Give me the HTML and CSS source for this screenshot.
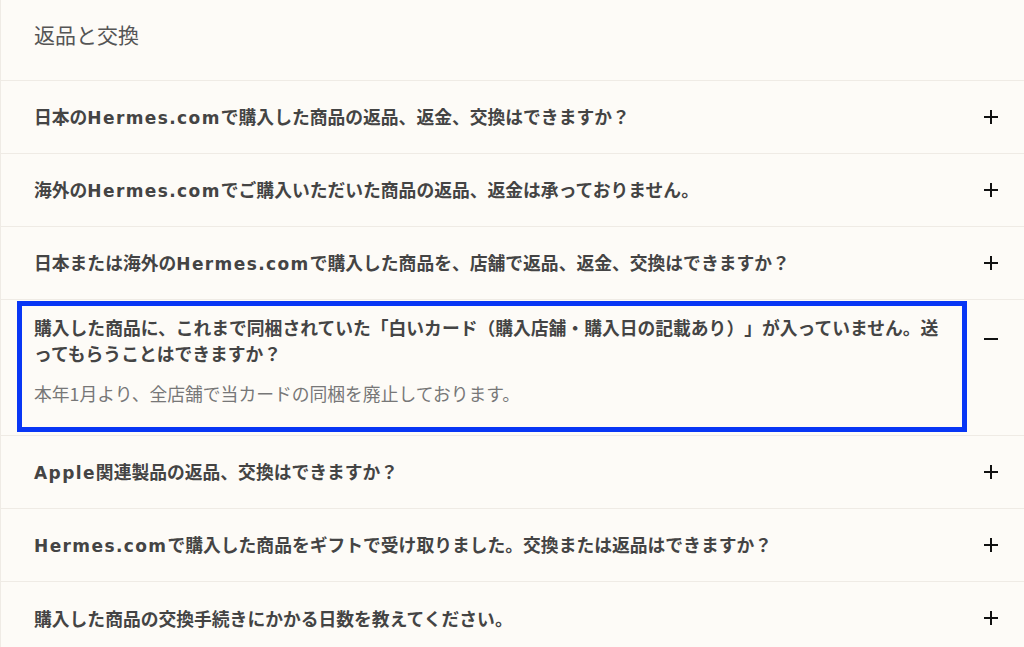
FILE: index.html
```html
<!DOCTYPE html>
<html lang="ja">
<head>
<meta charset="utf-8">
<link rel="stylesheet" href="styles.css">
</head>
<body>
<div class="faq">
  <h2 class="title">返品と交換</h2>
  <ul class="list">
    <li class="item">
      <div class="q"><span class="qtext">日本の<span class="en">Hermes.com</span>で購入した商品の返品、返金、交換はできますか？</span><span class="icon plus"></span></div>
    </li>
    <li class="item">
      <div class="q"><span class="qtext">海外の<span class="en">Hermes.com</span>でご購入いただいた商品の返品、返金は承っておりません。</span><span class="icon plus"></span></div>
    </li>
    <li class="item">
      <div class="q"><span class="qtext">日本または海外の<span class="en">Hermes.com</span>で購入した商品を、店舗で返品、返金、交換はできますか？</span><span class="icon plus"></span></div>
    </li>
    <li class="item open">
      <div class="focus">
        <div class="q"><span class="qtext">購入した商品に、これまで同梱されていた「白いカード（購入店舗・購入日の記載あり）」が入っていません。送ってもらうことはできますか？</span></div>
        <p class="answer">本年1月より、全店舗で当カードの同梱を廃止しております。</p>
      </div>
      <span class="icon minus"></span>
    </li>
    <li class="item">
      <div class="q"><span class="qtext"><span class="en">Apple</span>関連製品の返品、交換はできますか？</span><span class="icon plus"></span></div>
    </li>
    <li class="item">
      <div class="q"><span class="qtext"><span class="en">Hermes.com</span>で購入した商品をギフトで受け取りました。交換または返品はできますか？</span><span class="icon plus"></span></div>
    </li>
    <li class="item">
      <div class="q"><span class="qtext">購入した商品の交換手続きにかかる日数を教えてください。</span><span class="icon plus"></span></div>
    </li>
  </ul>
</div>
</body>
</html>
```
FILE: styles.css
```css
html, body {
  margin: 0;
  padding: 0;
  background: #fdfbf7;
}
body {
  font-family: "Noto Sans CJK JP", "Noto Sans", sans-serif;
  color: #444;
  height: 647px;
  overflow: hidden;
  text-spacing-trim: space-all;
}
.faq {
  border-left: 1px solid #efebe5;
  min-height: 100%;
}
.title {
  margin: 0;
  height: 81px;
  box-sizing: border-box;
  padding: 20px 0 0 33px;
  font-size: 21px;
  font-weight: 400;
  line-height: 28px;
  color: #555;
  border-bottom: 1px solid #efebe5;
}
.list {
  list-style: none;
  margin: 0;
  padding: 0;
}
.item {
  border-bottom: 1px solid #efebe5;
  position: relative;
}
.q {
  display: flex;
  align-items: center;
  justify-content: space-between;
  height: 72px;
  padding: 0 26px 0 33px;
  box-sizing: border-box;
}
.qtext {
  font-size: 17.8px;
  font-weight: 700;
  line-height: 26px;
  color: #444;
}
.en {
  font-family: "DejaVu Sans", sans-serif;
  font-size: 17px;
  letter-spacing: 1.4px;
}
.icon {
  position: relative;
  width: 14px;
  height: 14px;
  flex: none;
}
.icon::before, .plus::after {
  content: "";
  position: absolute;
  background: #111;
}
.icon::before {
  left: 0;
  top: 6px;
  width: 14px;
  height: 2px;
}
.plus::after {
  left: 6px;
  top: 0;
  width: 2px;
  height: 14px;
}
.open {
  padding: 1px 0 3px 0;
}
.focus {
  margin: 0 57px 0 16px;
  border: 5px solid #0836f5;
  padding: 8px 18px 21px 12px;
}
.focus .q {
  height: auto;
  padding: 0;
}
.answer {
  margin: 14px 0 0 0;
  font-size: 17.8px;
  line-height: 26px;
  color: #777;
  font-weight: 400;
}
.minus {
  position: absolute;
  right: 26px;
  top: 32px;
}
```
